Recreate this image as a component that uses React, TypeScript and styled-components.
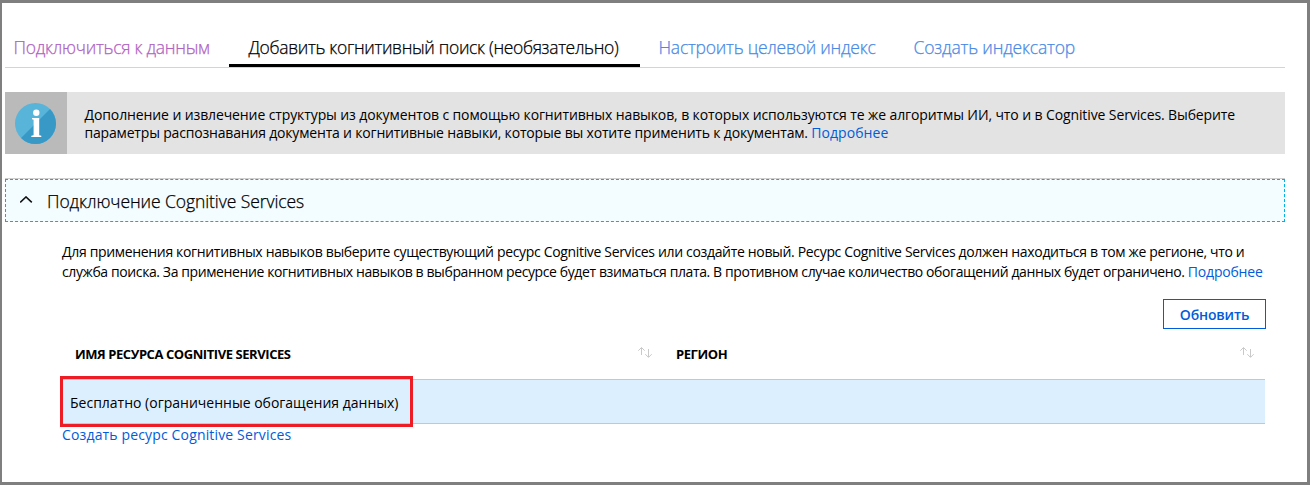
import React from "react";
import styled, { createGlobalStyle } from "styled-components";

const GlobalStyle = createGlobalStyle`
  *, *::before, *::after { box-sizing: border-box; }
  body {
    margin: 0;
    background: #fff;
    color: #000;
    font-family: "Open Sans", "Noto Sans", sans-serif;
    font-size: 14px;
  }
`;

const Frame = styled.main`
  width: 1310px;
  height: 485px;
  padding-left: 3px;
  background: #fff;
  border: 3px solid #7f7f7f;
  border-left-width: 2px;
`;

const Tabs = styled.nav`
  display: flex;
  width: 1280px;
  height: 65px;
  padding-top: 32px;
  border-bottom: 1px solid #d3d4d5;
`;

const Tab = styled.a<{ $width: number; $pad?: number; $tone: string; $active?: boolean; $track: number }>`
  width: ${(p) => p.$width}px;
  height: 32px;
  padding-left: ${(p) => p.$pad ?? 19}px;
  border-bottom: ${(p) => (p.$active ? "3px solid #000" : "0")};
  color: ${(p) => p.$tone};
  font-size: 17.5px;
  font-weight: 300;
  -webkit-text-stroke: 0.25px currentColor;
  line-height: 25px;
  letter-spacing: ${(p) => p.$track}px;
  white-space: nowrap;
`;

const Banner = styled.section`
  display: flex;
  width: 1280px;
  height: 62px;
  margin-top: 24px;
  background: #e3e3e3;
`;

const BannerIcon = styled.div`
  display: flex;
  align-items: center;
  justify-content: center;
  width: 62px;
  padding: 0 1px 0 0;
  background: #bababa;
`;

const BannerText = styled.div`
  padding: 14px 0 0 17.5px;
  line-height: 18px;
`;

const Line = styled.div<{ $track?: number }>`
  white-space: nowrap;
  letter-spacing: ${(p) => p.$track ?? 0}px;
`;

const Link = styled.a<{ $track?: number }>`
  color: #015cda;
  letter-spacing: ${(p) => p.$track ?? 0}px;
`;

const Accordion = styled.section`
  width: 1280px;
  margin-top: 24px;
  border-top: 1px solid #cfcfcf;
`;

const AccordionHeader = styled.header`
  display: flex;
  align-items: center;
  height: 43px;
  padding-left: 14px;
  background: #f3fcff;
  border: 1px dashed #00b0e8;
`;

const AccordionTitle = styled.h2`
  margin: 1px 0 0 14px;
  font-size: 17.5px;
  font-weight: 300;
  -webkit-text-stroke: 0.25px currentColor;
  line-height: 24px;
  letter-spacing: -0.08px;
`;

const Body = styled.div`
  width: 1261px;
  padding: 20px 0 0 57px;
`;

const Description = styled.div`
  font-size: 14px;
  line-height: 20px;
`;

const RefreshButton = styled.button`
  display: block;
  width: 103px;
  height: 30px;
  margin: 17px 0 0 auto;
  padding: 0;
  background: #fff;
  border: 1px solid #015cda;
  color: #015cda;
  font: 600 14px/29px "Open Sans", sans-serif;
  letter-spacing: -0.15px;
`;

const TableHead = styled.div`
  display: flex;
  height: 50px;
  width: 1203px;
`;

const HeadCell = styled.div<{ $width: number; $pad: number }>`
  display: flex;
  justify-content: space-between;
  width: ${(p) => p.$width}px;
  padding: 15px 11px 0 ${(p) => p.$pad}px;
  font-size: 13px;
  font-weight: 700;
  line-height: 21px;
  letter-spacing: -0.43px;

  svg { margin-top: 3px; }
`;

const Row = styled.div`
  position: relative;
  width: 1203px;
  height: 45px;
  padding: 13px 0 0 8px;
  background: #dceffe;
  border: solid #c5c8ca;
  border-width: 1px 0;
  line-height: 20px;
`;

const Highlight = styled.div`
  position: absolute;
  top: -4px;
  left: -2px;
  width: 353px;
  height: 51px;
  border: 3px solid #ee1c25;
`;

const Footer = styled.div`
  line-height: 22px;
`;

const InfoIcon = () => (
  <svg width="41" height="41" viewBox="0 0 41 41">
    <circle cx="20.5" cy="20.5" r="20.5" fill="#59b4d9" />
    <path d="M35 6A20.5 20.5 0 0 1 6 35Z" fill="#3999c6" />
    <circle cx="21.3" cy="9.8" r="3.2" fill="#fff" />
    <path d="M17 15H24.2V32.2L26.3 32.7V34H16.3V32.7L18.6 32.2V16.8L17 16.3Z" fill="#fff" />
  </svg>
);

const Chevron = () => (
  <svg width="13" height="9" viewBox="0 0 13 9" fill="none" stroke="#111" strokeWidth="1.5">
    <path d="M.2 6.4 6 .9 11.8 6.4" />
  </svg>
);

const SortIcon = () => (
  <svg width="15" height="12" viewBox="0 0 15 12" fill="none" stroke="#c9c9c9" strokeWidth="1">
    <path d="M4.5 8V.8M1.3 3.7 4.5 .5 7.7 3.7M11.5 2V10M8.3 7.2 11.5 10.4 14.7 7.2" />
  </svg>
);

export default function App() {
  return (
    <Frame>
      <GlobalStyle />
      <Tabs>
        <Tab $width={224} $pad={8.5} $tone="#b063c3" $track={-0.26}>Подключиться к данным</Tab>
        <Tab $width={411} $pad={19.5} $tone="#000" $active $track={-0.33}>Добавить когнитивный поиск (необязательно)</Tab>
        <Tab $width={255} $pad={18.5} $tone="#4a8ae5" $track={-0.23}>Настроить целевой индекс</Tab>
        <Tab $width={200} $pad={18.5} $tone="#4a8ae5" $track={-0.17}>Создать индексатор</Tab>
      </Tabs>
      <Banner>
        <BannerIcon>
          <InfoIcon />
        </BannerIcon>
        <BannerText>
          <Line $track={-0.11}>
            Дополнение и извлечение структуры из документов с помощью когнитивных навыков, в которых используются те же алгоритмы ИИ, что и в Cognitive Services. Выберите
          </Line>
          <Line $track={-0.18}>
            параметры распознавания документа и когнитивные навыки, которые вы хотите применить к документам. <Link $track={0.05}>Подробнее</Link>
          </Line>
        </BannerText>
      </Banner>
      <Accordion>
        <AccordionHeader>
          <Chevron />
          <AccordionTitle>Подключение Cognitive Services</AccordionTitle>
        </AccordionHeader>
        <Body>
          <Description>
            <Line $track={-0.335}>
              Для применения когнитивных навыков выберите существующий ресурс Cognitive Services или создайте новый. Ресурс Cognitive Services должен находиться в том же регионе, что и
            </Line>
            <Line $track={-0.395}>
              служба поиска. За применение когнитивных навыков в выбранном ресурсе будет взиматься плата. В противном случае количество обогащений данных будет ограничено. <Link $track={-0.2}>Подробнее</Link>
            </Line>
          </Description>
          <RefreshButton>Обновить</RefreshButton>
          <TableHead>
            <HeadCell $width={601} $pad={13}>
              ИМЯ РЕСУРСА COGNITIVE SERVICES
              <SortIcon />
            </HeadCell>
            <HeadCell $width={602} $pad={13}>
              РЕГИОН
              <SortIcon />
            </HeadCell>
          </TableHead>
          <Row>
            Бесплатно (ограниченные обогащения данных)
            <Highlight />
          </Row>
          <Footer>
            <Link $track={0.15}>Создать ресурс Cognitive Services</Link>
          </Footer>
        </Body>
      </Accordion>
    </Frame>
  );
}
